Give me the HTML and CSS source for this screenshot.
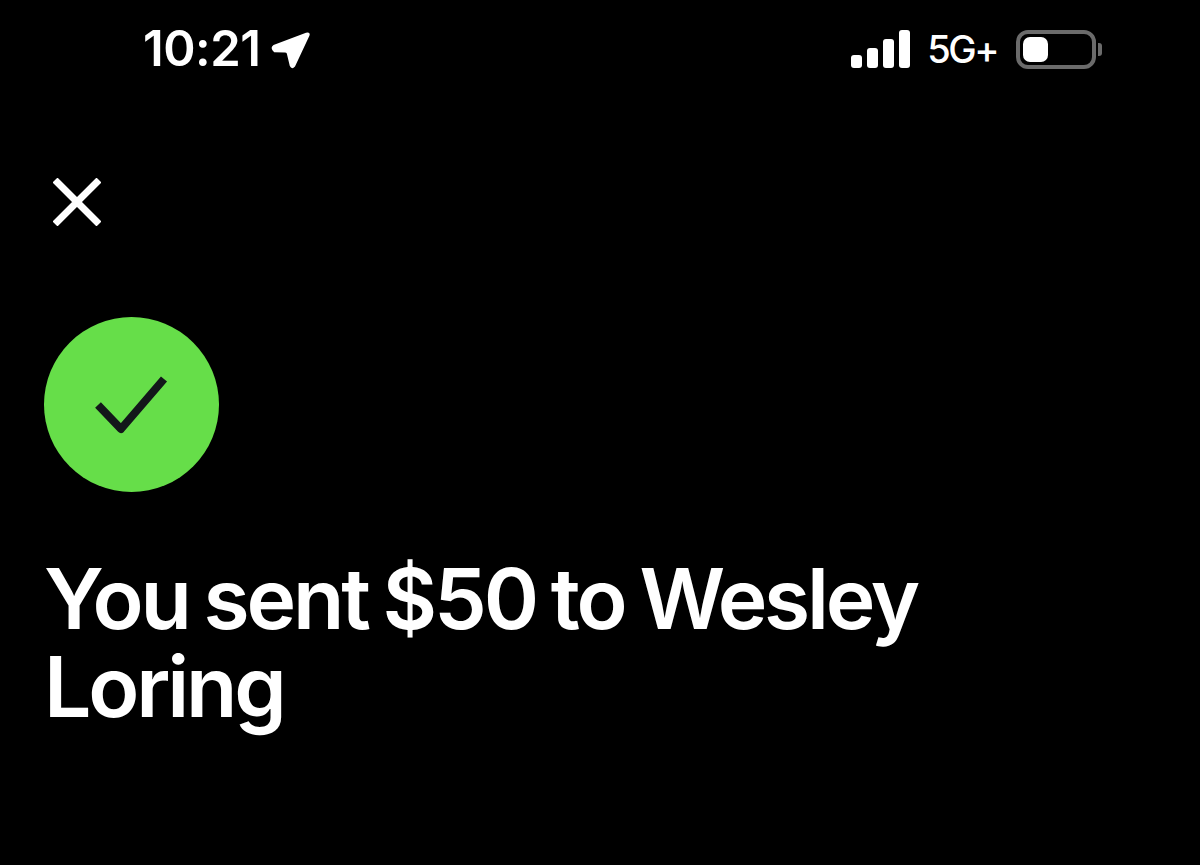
FILE: index.html
```html
<!DOCTYPE html>
<html>

<head>
  <title>Payment sent</title>
  <link rel="stylesheet" href="styles.css">
</head>

<body>
  <div class="status-bar">
    <div class="status-left">
      <span class="time">10:21</span>
      <svg class="location" width="40" height="38" viewBox="0 0 40 38">
        <path d="M2.5 13 L35 .8 Q39.8 -.4 38.4 3.8 L24 34.5 Q20.8 38 18.8 34 L15.8 21.5 Q15.4 20.4 14 20.4 L3.2 20.2 Q-1.6 16 2.5 13 Z" fill="#fff" />
      </svg>
    </div>
    <div class="status-right">
      <div class="signal">
        <span class="bar bar-1"></span>
        <span class="bar bar-2"></span>
        <span class="bar bar-3"></span>
        <span class="bar bar-4"></span>
      </div>
      <span class="network">5G+</span>
      <div class="battery">
        <div class="battery-body">
          <div class="battery-level"></div>
        </div>
        <div class="battery-cap"></div>
      </div>
    </div>
  </div>

  <div class="close">
    <svg width="48" height="48" viewBox="0 0 48 48">
      <path d="M4.5 4.5 L43.5 43.5 M43.5 4.5 L4.5 43.5" stroke="#fff" stroke-width="7" fill="none" stroke-linecap="square" />
    </svg>
  </div>

  <div class="check-circle">
    <svg width="175" height="175" viewBox="0 0 175 175">
      <path d="M54 88 L77 112 L120 62" stroke="#13171a" stroke-width="8" fill="none" stroke-linejoin="round" />
    </svg>
  </div>

  <h1 class="message">You sent $50 to Wesley Loring</h1>
</body>

</html>
```

FILE: styles.css
```css
body {
  background: #000;
  margin: 0;
  color: white;
  font-family: Inter, "Liberation Sans", sans-serif;
  width: 1200px;
  height: 865px;
  overflow: hidden;
}

.status-bar {
  display: flex;
  justify-content: space-between;
  align-items: center;
  height: 48px;
  padding: 26px 98px 0 143px;
}

.status-left {
  display: flex;
  align-items: center;
  gap: 11px;
}

.time {
  font-size: 49px;
  font-weight: 600;
  letter-spacing: -0.5px;
  position: relative;
  top: -2px;
}

.location {
  margin-top: 1px;
}

.status-right {
  display: flex;
  align-items: center;
  margin-bottom: 2px;
}

.signal {
  display: flex;
  align-items: flex-end;
  gap: 5px;
  height: 38px;
}

.bar {
  width: 11px;
  background: white;
  border-radius: 3px;
}

.bar-1 {
  height: 13px;
}

.bar-2 {
  height: 20px;
}

.bar-3 {
  height: 29px;
}

.bar-4 {
  height: 38px;
}

.network {
  margin-left: 17px;
  font-size: 38px;
  font-weight: 500;
  letter-spacing: -2.5px;
}

.battery {
  display: flex;
  align-items: center;
  margin-left: 19px;
}

.battery-body {
  box-sizing: border-box;
  width: 80px;
  height: 39px;
  padding: 3px;
  border: 4px solid #6b6b6b;
  border-radius: 12px;
}

.battery-level {
  width: 25px;
  height: 100%;
  background: white;
  border-radius: 7px;
}

.battery-cap {
  width: 4px;
  height: 13px;
  margin-left: 2px;
  background: #6b6b6b;
  border-radius: 0 3px 3px 0;
}

.close {
  height: 48px;
  margin: 104px 0 0 53px;
}

.check-circle {
  width: 175px;
  height: 175px;
  margin: 91px 0 0 44px;
  background: #66de49;
  border-radius: 50%;
}

.message {
  width: 1000px;
  margin: 63px 0 0 44px;
  font-size: 84px;
  font-weight: 600;
  line-height: 88px;
  letter-spacing: -3.2px;
  word-spacing: -3px;
}
```
